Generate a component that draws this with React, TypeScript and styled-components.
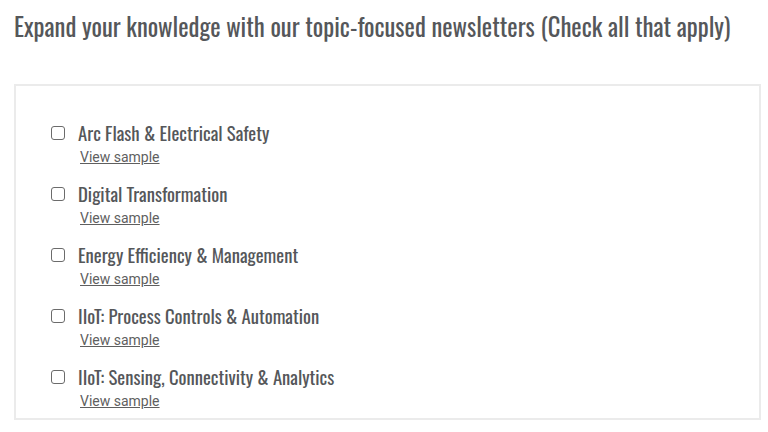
import React from "react";
import styled, { createGlobalStyle } from "styled-components";

const GlobalStyle = createGlobalStyle`
  html, body {
    margin: 0;
    padding: 0;
    background: #ffffff;
  }
`;

const condensed = `"Oswald", "Liberation Sans Narrow", "DejaVu Sans Condensed", sans-serif`;

const Page = styled.div`
  width: 768px;
  height: 432px;
  overflow: hidden;
  padding: 11px 0 0 14px;
  box-sizing: border-box;
`;

const Title = styled.h2`
  margin: 0;
  font-family: ${condensed};
  font-weight: 400;
  font-size: 24.6px;
  line-height: 30px;
  color: #55575a;
  white-space: nowrap;
`;

const Panel = styled.div`
  margin-top: 43px;
  width: 747px;
  height: 336px;
  box-sizing: border-box;
  border: 2px solid #ebebeb;
  padding: 36px 0 0 35px;
  display: flex;
  flex-direction: column;
  gap: 17px;
`;

const Row = styled.label`
  display: flex;
  align-items: flex-start;
  gap: 13px;
`;

const Box = styled.span`
  flex: none;
  width: 12px;
  height: 12px;
  margin-top: 4px;
  border: 1.5px solid #6b6b6b;
  border-radius: 3px;
  background: #fff;
`;

const Text = styled.div`
  display: flex;
  flex-direction: column;
`;

const Name = styled.span`
  font-family: ${condensed};
  font-size: 18.7px;
  line-height: 22px;
  color: #55575a;
`;

const Sample = styled.a`
  margin: 4px 0 0 2px;
  font-family: Roboto, "Liberation Sans", sans-serif;
  font-size: 14px;
  line-height: 18px;
  color: #5f5f5f;
  text-decoration: underline;
`;

const topics = [
  "Arc Flash & Electrical Safety",
  "Digital Transformation",
  "Energy Efficiency & Management",
  "IIoT: Process Controls & Automation",
  "IIoT: Sensing, Connectivity & Analytics",
];

export default function App() {
  return (
    <Page>
      <GlobalStyle />
      <Title>Expand your knowledge with our topic-focused newsletters (Check all that apply)</Title>
      <Panel>
        {topics.map((t) => (
          <Row key={t}>
            <Box />
            <Text>
              <Name>{t}</Name>
              <Sample href="#">View sample</Sample>
            </Text>
          </Row>
        ))}
      </Panel>
    </Page>
  );
}
